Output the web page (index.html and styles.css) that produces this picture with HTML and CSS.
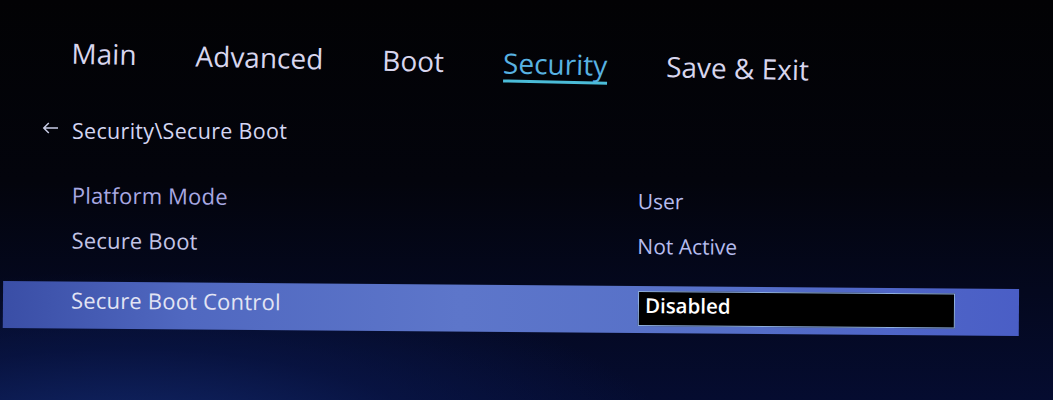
FILE: index.html
```html
<!DOCTYPE html>
<html lang="en">
<head>
  <meta charset="UTF-8" />
  <meta name="viewport" content="width=device-width, initial-scale=1" />
  <title>Security - Secure Boot</title>
  <link rel="stylesheet" href="styles.css">
</head>
<body>
  <div class="screen">
    <nav class="tabs">
      <span class="tab">Main</span>
      <span class="tab">Advanced</span>
      <span class="tab">Boot</span>
      <span class="tab active">Security</span>
      <span class="tab">Save &amp; Exit</span>
    </nav>

    <div class="crumb">
      <svg class="back" width="17" height="12" viewBox="0 0 17 12">
        <path d="M16 6H1.8M6.8 1L1.8 6l5 5" fill="none" stroke="#c8cce6" stroke-width="1.5" />
      </svg>
      <span>Security\Secure Boot</span>
    </div>

    <div class="items">
      <div class="row">
        <span class="label">Platform Mode</span>
        <span class="value">User</span>
      </div>
      <div class="row">
        <span class="label second">Secure Boot</span>
        <span class="value">Not Active</span>
      </div>
      <div class="row selected">
        <span class="label">Secure Boot Control</span>
        <span class="field">Disabled</span>
      </div>
    </div>
  </div>
</body>
</html>
```

FILE: styles.css
```css
body {
  margin: 0;
  height: 400px;
  overflow: hidden;
  font-family: "Open Sans", "Noto Sans", sans-serif;
  background-color: #02030a;
  background-image:
    radial-gradient(ellipse 65% 55% at 12% 112%, #13296c 0%, rgba(10, 24, 78, 0.6) 45%, rgba(0, 0, 0, 0) 80%),
    linear-gradient(to bottom, #020204 0%, #03040c 45%, #050c30 100%);
}

.screen {
  padding-top: 34px;
}

/* top menu, photographed at a slight angle */
.tabs {
  display: flex;
  align-items: flex-end;
  gap: 59px;
  padding-left: 72px;
  transform: rotate(1.3deg);
  transform-origin: 0 0;
}

.tab {
  font-size: 28px;
  line-height: 34px;
  color: #d8d6ee;
  border-bottom: 3px solid transparent;
}

.tab.active {
  color: #58b2e2;
  border-bottom-color: #4bbcd8;
}

.crumb {
  display: flex;
  align-items: center;
  gap: 13px;
  margin-top: 47px;
  padding-left: 42px;
  font-size: 21.5px;
  line-height: 26px;
  letter-spacing: 0.3px;
  color: #d4d6f2;
}

.back {
  margin-top: -6px;
}

.items {
  margin-top: 27px;
  transform: rotate(0.45deg);
  transform-origin: 0 0;
}

.row {
  display: flex;
  align-items: center;
  height: 45px;
  padding-left: 72px;
}

.label {
  width: 566px;
  font-size: 22px;
  line-height: 26px;
  letter-spacing: 0.2px;
  color: #a8a8e2;
}

.label.second {
  color: #c2c4e6;
}

.value {
  padding-top: 5px;
  font-size: 21px;
  line-height: 26px;
  color: #b6bcee;
}

.row.selected {
  box-sizing: border-box;
  align-items: flex-start;
  margin-top: 20px;
  margin-left: 4px;
  padding-left: 68px;
  padding-top: 5px;
  width: 1016px;
  height: 47px;
  background: linear-gradient(to right, #3a4ea6 0%, #5068c0 18%, #5d76ca 45%, #5670c8 70%, #4a5ec6 100%);
}

.row.selected .label {
  color: #e2e4f4;
}

.field {
  box-sizing: border-box;
  width: 317px;
  height: 35px;
  margin-left: 1px;
  padding: 0 6px;
  background: #000;
  border: 1px solid #8fb0e0;
  color: #ffffff;
  font-weight: 600;
  font-size: 20.5px;
  line-height: 26px;
}
```
